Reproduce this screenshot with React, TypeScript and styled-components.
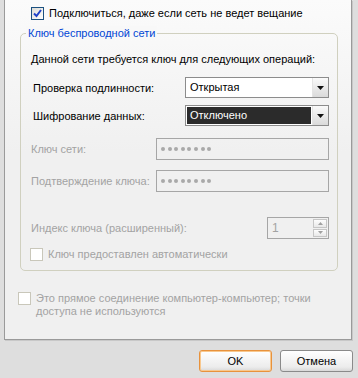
import React from 'react';
import styled, { createGlobalStyle } from 'styled-components';

const GlobalStyle = createGlobalStyle`
  html, body {
    margin: 0;
    padding: 0;
    background: #dedede;
  }
  body {
    font-family: 'Liberation Sans', Arial, sans-serif;
    font-size: 11px;
    color: #000;
  }
`;

const Window = styled.div`
  width: 358px;
  height: 378px;
  background: #dedede;
  overflow: hidden;
`;

const Pane = styled.div`
  margin-left: 4px;
  width: 348px;
  height: 340px;
  box-sizing: border-box;
  border: 1px solid #9a9a9a;
  border-top: none;
  box-shadow: 1px 1px 0 #c8c8c8;
  background: linear-gradient(#fbfbfb, #f0f0f0 45%);
  padding-top: 7px;
`;

const CheckRow = styled.label<{ $indent: number; $disabled?: boolean }>`
  display: flex;
  align-items: flex-start;
  gap: 5px;
  margin-left: ${(p) => p.$indent}px;
  line-height: 13px;
  color: ${(p) => (p.$disabled ? '#a3a3a3' : '#000')};
`;

const Box = styled.span<{ $disabled?: boolean }>`
  flex: none;
  width: 13px;
  height: 13px;
  box-sizing: border-box;
  border: 1px solid ${(p) => (p.$disabled ? '#c9c7ba' : '#1c5180')};
  background: ${(p) => (p.$disabled ? '#fff' : 'linear-gradient(135deg, #dcdcd7, #fff)')};
  display: flex;
  align-items: center;
  justify-content: center;
`;

const Group = styled.div`
  position: relative;
  margin: 13px 0 0 15px;
  width: 318px;
  box-sizing: border-box;
  border: 1px solid #d0d0bf;
  border-radius: 5px;
  padding: 18px 8px 9px 10px;
`;

const Legend = styled.span`
  position: absolute;
  left: 5px;
  top: -8px;
  padding: 0 2px;
  background: #f8f8f8;
  color: #0046d5;
  line-height: 14px;
`;

const Intro = styled.div`
  line-height: 14px;
`;

const Row = styled.div<{ $gap: number; $disabled?: boolean }>`
  display: flex;
  align-items: center;
  justify-content: space-between;
  margin-top: ${(p) => p.$gap}px;
  color: ${(p) => (p.$disabled ? '#a3a3a3' : '#000')};
`;

const Label = styled.span<{ $shift?: number }>`
  padding-left: ${(p) => p.$shift ?? 0}px;
`;

const Select = styled.div`
  display: flex;
  width: 144px;
  height: 21px;
  box-sizing: border-box;
  border: 1px solid #8c8c8c;
  background: #fff;
`;

const SelectValue = styled.div<{ $active?: boolean }>`
  flex: 1;
  margin: 1px;
  padding-left: 3px;
  line-height: 17px;
  background: ${(p) => (p.$active ? '#2b2b2b' : '#fff')};
  color: ${(p) => (p.$active ? '#fff' : '#000')};
`;

const ArrowBtn = styled.div`
  width: 15px;
  background: linear-gradient(#fafafa, #dadada);
  border-left: 1px solid #e4e4e4;
  display: flex;
  align-items: center;
  justify-content: center;
`;

const Field = styled.div`
  width: 173px;
  height: 22px;
  box-sizing: border-box;
  border: 1px solid #a6a6a6;
  padding-left: 4px;
  display: flex;
  align-items: center;
  gap: 2.6px;
`;

const Dot = styled.span`
  width: 4px;
  height: 4px;
  border-radius: 50%;
  background: #a9a9a9;
`;

const Spinner = styled.div`
  display: flex;
  width: 62px;
  height: 22px;
  box-sizing: border-box;
  border: 1px solid #a6a6a6;
`;

const SpinValue = styled.div`
  flex: 1;
  padding-left: 4px;
  line-height: 20px;
  font-size: 12px;
  color: #a3a3a3;
`;

const SpinButtons = styled.div`
  width: 14px;
  margin: 1px;
  display: flex;
  flex-direction: column;
  gap: 1px;
`;

const SpinBtn = styled.div`
  flex: 1;
  box-sizing: border-box;
  border: 1px solid #c6c6c6;
  background: linear-gradient(#fdfdfd, #e8e8e8);
  display: flex;
  align-items: center;
  justify-content: center;
`;

const BottomCheck = styled.div`
  margin-top: 21px;
`;

const Footer = styled.div`
  display: flex;
  justify-content: flex-end;
  gap: 8px;
  padding: 10px 5px 0 0;
`;

const Button = styled.button<{ $focused?: boolean }>`
  width: 73px;
  height: 22px;
  box-sizing: border-box;
  padding: 0;
  font: inherit;
  color: #000;
  border: 1px solid ${(p) => (p.$focused ? '#e8923c' : '#8a8a8a')};
  border-radius: 3px;
  background: linear-gradient(#ffffff, #ececec 80%, #d8d8d8);
  box-shadow: ${(p) => (p.$focused ? 'inset 0 0 0 1px #f8c88e' : 'none')};
`;

const DownArrow = () => (
  <svg width="7" height="4" viewBox="0 0 7 4">
    <path d="M0 0h7L3.5 4z" fill="#111" />
  </svg>
);

const Tri = ({ up }: { up?: boolean }) => (
  <svg width="5" height="3" viewBox="0 0 5 3">
    <path d={up ? 'M0 3h5L2.5 0z' : 'M0 0h5L2.5 3z'} fill="#a0a0a0" />
  </svg>
);

const Check = () => (
  <svg width="9" height="9" viewBox="0 0 9 9">
    <path d="M1 4.5l2.5 2.5L8 1" stroke="#2042c8" strokeWidth="2" fill="none" />
  </svg>
);

const Dots = () => (
  <Field>
    {Array.from({ length: 8 }).map((_, i) => (
      <Dot key={i} />
    ))}
  </Field>
);

const App: React.FC = () => {
  return (
    <Window>
      <GlobalStyle />
      <Pane>
        <CheckRow $indent={26}>
          <Box>
            <Check />
          </Box>
          Подключиться, даже если сеть не ведет вещание
        </CheckRow>

        <Group>
          <Legend>Ключ беспроводной сети</Legend>
          <Intro>Данной сети требуется ключ для следующих операций:</Intro>

          <Row $gap={11}>
            <Label $shift={2}>Проверка подлинности:</Label>
            <Select>
              <SelectValue>Открытая</SelectValue>
              <ArrowBtn>
                <DownArrow />
              </ArrowBtn>
            </Select>
          </Row>

          <Row $gap={7}>
            <Label $shift={2}>Шифрование данных:</Label>
            <Select>
              <SelectValue $active>Отключено</SelectValue>
              <ArrowBtn>
                <DownArrow />
              </ArrowBtn>
            </Select>
          </Row>

          <Row $gap={12} $disabled>
            <Label>Ключ сети:</Label>
            <Dots />
          </Row>

          <Row $gap={10} $disabled>
            <Label>Подтверждение ключа:</Label>
            <Dots />
          </Row>

          <Row $gap={25} $disabled>
            <Label>Индекс ключа (расширенный):</Label>
            <Spinner>
              <SpinValue>1</SpinValue>
              <SpinButtons>
                <SpinBtn>
                  <Tri up />
                </SpinBtn>
                <SpinBtn>
                  <Tri />
                </SpinBtn>
              </SpinButtons>
            </Spinner>
          </Row>

          <Row $gap={9} $disabled>
            <CheckRow $indent={-1} $disabled>
              <Box $disabled />
              Ключ предоставлен автоматически
            </CheckRow>
          </Row>
        </Group>

        <BottomCheck>
          <CheckRow $indent={13} $disabled>
            <Box $disabled />
            <span>
              Это прямое соединение компьютер-компьютер; точки
              <br />
              доступа не используются
            </span>
          </CheckRow>
        </BottomCheck>
      </Pane>

      <Footer>
        <Button $focused>OK</Button>
        <Button>Отмена</Button>
      </Footer>
    </Window>
  );
};

export default App;
